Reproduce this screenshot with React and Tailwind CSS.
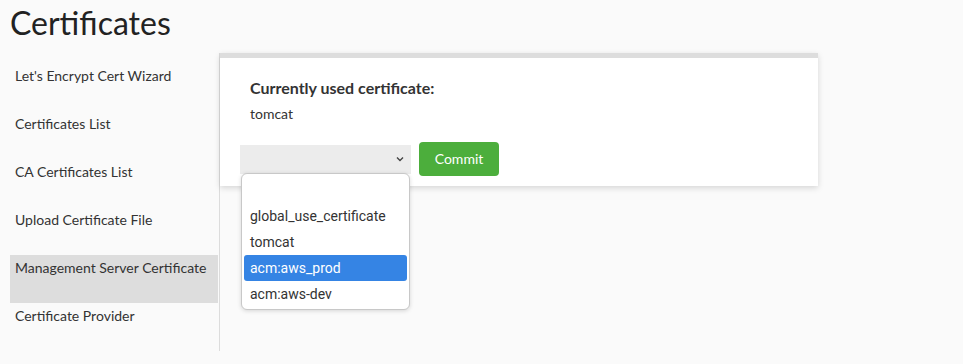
import React from "react";

const items = [
  "Let's Encrypt Cert Wizard",
  "Certificates List",
  "CA Certificates List",
  "Upload Certificate File",
  "Management Server Certificate",
  "Certificate Provider",
];

export default function App() {
  return (
    <div className="h-[364px] w-[963px] bg-[#fafafa] text-[#222] font-['Lato',sans-serif] relative overflow-hidden">
      <div className="h-[53px] pl-[10px] pt-[3px]">
        <h1 className="text-[32px] leading-[40px] text-[#222]">Certificates</h1>
      </div>
      <div className="flex">
        <div className="ml-[10px] w-[210px] border-r border-[#dcdcdc] pt-[10px] h-[298px]">
          {items.map((t, i) => (
            <div
              key={t}
              className={
                "h-[48px] pl-[5px] pt-[4px] text-[14px] leading-[18px] text-[#333] " +
                (i === 4 ? "bg-[#dddddd] mr-px" : "")
              }
            >
              {t}
            </div>
          ))}
        </div>
        <div className="w-[598px] h-[133px] bg-white border-t-[5px] border-[#dddddd] shadow-[0_2px_6px_rgba(0,0,0,0.15)] relative">
          <div className="pl-[30px] pt-[20px]">
            <div className="text-[16px] leading-[20px] font-bold text-[#333]">Currently used certificate:</div>
            <div className="text-[14px] leading-[18px] mt-[7px] text-[#333]">tomcat</div>
          </div>
          <div className="flex items-center pl-[20px] mt-[19px] gap-[8px]">
            <div className="w-[171px] h-[29px] bg-[#ececec] flex items-center justify-end pr-[6px]">
              <svg width="10" height="10" viewBox="0 0 10 10" fill="none" stroke="#444" strokeWidth="1.4">
                <path d="M2 3.5 L5 6.5 L8 3.5" />
              </svg>
            </div>
            <button className="w-[80px] h-[34px] bg-[#4cae3c] rounded-[4px] text-white text-[14px] leading-[20px]">
              Commit
            </button>
          </div>
        </div>
      </div>
      <div className="absolute left-[241px] top-[173px] w-[169px] h-[137px] bg-white rounded-[6px] border border-[#c8c8c8] shadow-[0_1px_4px_rgba(0,0,0,0.15)] pt-[3px] px-[2px] font-['Roboto',Arial,sans-serif] text-[14px] text-[#333]">
        {["", "global_use_certificate", "tomcat", "acm:aws_prod", "acm:aws-dev"].map((o, i) => (
          <div
            key={i}
            className={
              "h-[26px] leading-[26px] pl-[6px] rounded-[3px] " +
              (i === 3 ? "bg-[#3584e4] text-white" : "")
            }
          >
            {o}
          </div>
        ))}
      </div>
    </div>
  );
}
